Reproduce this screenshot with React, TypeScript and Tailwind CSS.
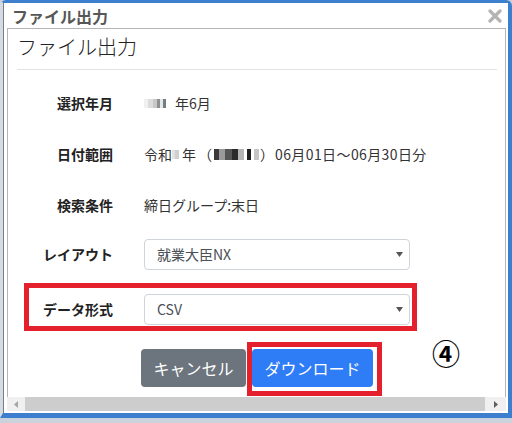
import React from "react";

function Blur({ parts, h = 9 }: { parts: [number, string][]; h?: number }) {
  return (
    <span className="inline-flex items-center align-middle">
      {parts.map(([w, c], i) => (
        <span key={i} className="inline-block" style={{ width: w, height: h, background: c }} />
      ))}
    </span>
  );
}

function Caret() {
  return (
    <svg width="7" height="5" viewBox="0 0 7 5" className="block">
      <path d="M0 0 L7 0 L3.5 5 Z" fill="#555" />
    </svg>
  );
}

function Select({ value }: { value: string }) {
  return (
    <div className="w-[266px] h-[31px] border border-[#ced4da] rounded-[4px] bg-white flex items-center justify-between pl-[12px] pr-[6px] text-[14px] text-[#495057]">
      <span>{value}</span>
      <Caret />
    </div>
  );
}

export default function App() {
  return (
    <div className="w-[512px] h-[423px] bg-[#c9d2dd] font-['Noto_Sans_CJK_JP','Noto_Sans',sans-serif] overflow-hidden">
      <div className="h-[418px] rounded-t-[6px] border-t-[3px] border-r-[4px] border-b-[5px] border-l-[3px] border-t-[#3d7fcf] border-r-[#3d7fcf] border-b-[#3d7fcf] border-l-[#d3dbe5] flex flex-col">
        <div className="flex-1 bg-white border-l border-[#7d7d7d] flex flex-col">
          {/* title bar */}
          <div className="h-[25px] flex items-center justify-between pl-[8px] pr-[6px]">
            <span className="text-[16px] font-bold text-[#575757] leading-none">ファイル出力</span>
            <svg width="14" height="14" viewBox="0 0 14 14">
              <path d="M2 2 L12 12 M12 2 L2 12" stroke="#b3b3b3" strokeWidth="3.2" strokeLinecap="round" />
            </svg>
          </div>
          {/* panel */}
          <div className="ml-[3px] w-[499px] h-[369px] border-t border-l border-r border-[#b5b5b5] overflow-hidden flex flex-col">
            <div className="pt-[3px] pl-[9px] h-[30px] box-content text-[20px] leading-[30px] text-[#222] font-light">
              ファイル出力
            </div>
            <div className="mt-[7px] ml-[9px] mr-[8px] h-px bg-[#e3e3e3]" />
            <div className="mt-[8px] flex flex-col text-[14px] text-[#333]">
              <div className="h-[51px] flex items-center">
                <div className="w-[105px] text-right font-bold text-[#222]">選択年月</div>
                <div className="ml-[31px] flex items-center">
                  <Blur parts={[[4, "#f0f0f0"], [5, "#dcdcdc"], [4, "#c8c8c8"], [3, "#8f8f8f"], [3, "#e6e6e6"], [3, "#6f7f86"], [6, "#ffffff"]]} />
                  <span className="ml-[3px]">年6月</span>
                </div>
              </div>
              <div className="h-[51px] flex items-center">
                <div className="w-[105px] text-right font-bold text-[#222]">日付範囲</div>
                <div className="ml-[31px] flex items-center">
                  <span>令和</span>
                  <Blur parts={[[3, "#e2e2e2"], [4, "#cfcfcf"], [3, "#ffffff"]]} />
                  <span>年</span>
                  <span className="ml-[2px] mr-[2px]">（</span>
                  <Blur parts={[[5, "#3a3a3a"], [6, "#9a9a9a"], [7, "#555555"], [6, "#2a2a2a"], [6, "#b5b5b5"], [3, "#ffffff"], [4, "#1f1f1f"], [3, "#ffffff"], [5, "#c6c6c6"]]} h={11} />
                  <span className="ml-[1px]">）</span>
                  <span className="ml-[1px] tracking-[0.4px]">06月01日～06月30日分</span>
                </div>
              </div>
              <div className="h-[51px] flex items-center">
                <div className="w-[105px] text-right font-bold text-[#222]">検索条件</div>
                <div className="ml-[31px]">締日グループ:末日</div>
              </div>
              <div className="mt-[8px] h-[31px] flex items-center">
                <div className="w-[105px] text-right font-bold text-[#222]">レイアウト</div>
                <div className="ml-[31px]">
                  <Select value="就業大臣NX" />
                </div>
              </div>
              <div className="mt-[13px] ml-[16px] w-[393px] border-[5px] border-[#e3202b] pt-[6px] pb-[1px] flex items-center">
                <div className="w-[84px] text-right font-bold text-[#222]">データ形式</div>
                <div className="ml-[31px]">
                  <Select value="CSV" />
                </div>
              </div>
              <div className="mt-[11px] flex items-start">
                <div className="mt-[7px] ml-[133px] w-[105px] h-[38px] rounded-[4px] bg-[#6c757d] text-white text-[16px] flex items-center justify-center">
                  キャンセル
                </div>
                <div className="ml-[1px] border-[5px] border-[#e3202b] pt-[2px] pb-[4px] pr-[4px]">
                  <div className="w-[121px] h-[38px] rounded-[4px] bg-[#2e7cf6] text-white text-[16px] flex items-center justify-center">
                    ダウンロード
                  </div>
                </div>
                <div className="ml-[50px] -mt-[6px] text-[28px] font-bold text-black leading-[34px]">④</div>
              </div>
            </div>
          </div>
          {/* scrollbar */}
          <div className="ml-[3px] w-[499px] h-[14px] bg-[#f0f0f0] flex items-center">
            <div className="w-[18px] flex justify-center">
              <svg width="4" height="7" viewBox="0 0 4 7"><path d="M4 0 L0 3.5 L4 7 Z" fill="#a6a6a6" /></svg>
            </div>
            <div className="w-[460px] h-[14px] bg-[#cdcdcd]" />
            <div className="flex-1 flex justify-center">
              <svg width="4" height="7" viewBox="0 0 4 7"><path d="M0 0 L4 3.5 L0 7 Z" fill="#606060" /></svg>
            </div>
          </div>
          <div className="h-[2px]" />
        </div>
      </div>
    </div>
  );
}
